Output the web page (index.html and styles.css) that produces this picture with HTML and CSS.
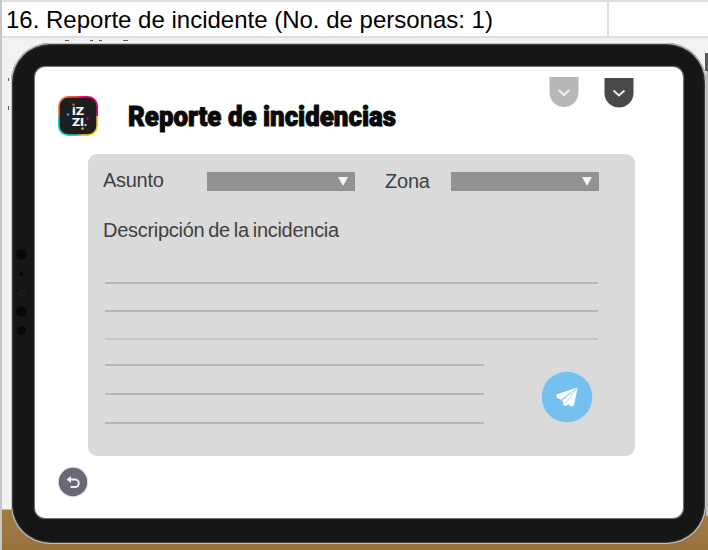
FILE: index.html
```html
<!DOCTYPE html>
<html lang="es">
<head>
<meta charset="utf-8">
<title>Reporte de incidencias</title>
<link rel="stylesheet" href="styles.css">
</head>
<body>
<div class="sheet">
  <div class="sheet-row"><div class="cell">16. Reporte de incidente (No. de personas: 1)</div><div class="cell-empty"></div></div>
  <div class="scene">
    <i class="mark mark-top"></i><i class="mark mark-left"></i><i class="mark mark-left-low"></i><i class="mark mark-right"></i><i class="mark mark-side"></i>
    <div class="tablet">
      <svg class="sensors" width="20" height="100" viewBox="0 0 20 100">
        <g fill="#080808"><circle cx="9.500" cy="14.500" r="5.300"/><circle cx="9.500" cy="34" r="2"/><circle cx="9.500" cy="71.500" r="5.300"/><circle cx="9.500" cy="90.500" r="4.200"/></g>
        <circle cx="10" cy="53" r="2.500" fill="#111a25" stroke="#17263a"/>
      </svg>
      <main class="screen">
        <header class="header">
          <svg class="logo" width="40" height="40" viewBox="0 0 40 40">
            <defs>
              <clipPath id="tile"><rect width="40" height="40" rx="10"/></clipPath>
              <linearGradient id="top"><stop offset="0" stop-color="#f58a45"/><stop offset=".5" stop-color="#e8443f"/><stop offset=".65" stop-color="#e6007e"/><stop offset="1" stop-color="#dc0088"/></linearGradient>
              <linearGradient id="bottom"><stop offset="0" stop-color="#20c5c5"/><stop offset=".45" stop-color="#32cbbb"/><stop offset=".6" stop-color="#e9cf35"/><stop offset="1" stop-color="#f5cb20"/></linearGradient>
            </defs>
            <g clip-path="url(#tile)"><path fill="url(#top)" d="M0 0h40v20H0z"/><path fill="url(#bottom)" d="M0 20h40v20H0z"/></g>
            <rect x="1.700" y="1.700" width="36.600" height="36.600" rx="8.500" fill="#1e1d20"/>
            <g class="logo-text"><text x="14" y="19" textLength="12" lengthAdjust="spacingAndGlyphs">iZ</text><text x="14" y="30" textLength="12" lengthAdjust="spacingAndGlyphs">ZI</text></g>
            <circle cx="15.500" cy="8.700" r="1.300" fill="#e65d32"/><circle cx="10" cy="18.500" r="1.200" fill="#20b7b2"/><circle cx="29.500" cy="22.500" r="1.200" fill="#ae1467"/><circle cx="27.500" cy="29" r="1" fill="#f6f6f6"/><circle cx="24.500" cy="32.500" r="1.300" fill="#e3ae28"/>
          </svg>
          <h1 class="title"><svg width="280" height="40" viewBox="0 0 280 40"><text x="1" y="28" textLength="268" lengthAdjust="spacingAndGlyphs">Reporte de incidencias</text></svg></h1>
          <div class="tabs">
            <svg width="30" height="31" viewBox="0 0 30 31"><path d="M.5 0h29v15.500a14.500 14.500 0 0 1-29 0z" fill="#b7b7b7"/><path d="M9.500 13l5.500 5 5.500-5" fill="none" stroke="#f1f1f1" stroke-width="2"/></svg>
            <svg width="30" height="31" viewBox="0 0 30 31"><path d="M.5 1h29v15a14.500 14.500 0 0 1-29 0z" fill="#484848"/><path d="M9.500 13.500l5.500 5 5.500-5" fill="none" stroke="#e8e8e8" stroke-width="2"/></svg>
          </div>
        </header>
        <section class="card">
          <div class="fields">
            <span class="label asunto">Asunto</span>
            <div class="select"><i class="caret"></i></div>
            <span class="label zona">Zona</span>
            <div class="select"><i class="caret"></i></div>
          </div>
          <div class="label description">Descripción de la incidencia</div>
          <div class="lines wide"><i></i><i></i><i class="faint"></i></div>
          <div class="lower">
            <div class="lines short"><i></i><i></i><i></i></div>
            <svg class="send" width="56" height="56" viewBox="0 0 56 56"><circle cx="28" cy="28" r="27" fill="#d3dbe3"/><circle cx="28" cy="28" r="25.300" fill="#74c1ef"/><path fill="#fff" d="M38.800 18.200L17 25.800l1 3 4 2zM38.800 18.200L22.800 32l2 1.200-.8 2.500 3 1.300 2.500-1.800 2.300 2.300 3-.8z"/><path d="M38.300 18.800L22.300 31.500M38.200 19L26.500 34.500" fill="none" stroke="#9cd2f3" stroke-width=".8"/></svg>
          </div>
        </section>
        <svg class="back" width="32" height="32" viewBox="0 0 32 32"><circle cx="16" cy="16" r="15.300" fill="#dfe0e8"/><circle cx="16" cy="16" r="14.200" fill="#686973"/><path fill="none" stroke="#f0f0f4" stroke-width="2" stroke-linejoin="round" d="M11 13.500h7a3.800 3.800 0 0 1 0 7.600h-4.500"/><path fill="#f0f0f4" d="M9.500 13.500l4.500-3.600v7.200z"/></svg>
      </main>
    </div>
  </div>
</div>
</body>
</html>
```

FILE: styles.css
```css
* { box-sizing: border-box; }
body { margin: 0; width: 708px; height: 550px; overflow: hidden; font-family: "Liberation Sans", Arial, sans-serif; }
svg { display: block; flex: none; }
.sheet { height: 550px; border-left: 2px solid #c6c6c6; }
.sheet-row { display: flex; height: 38px; border-top: 2px solid #dedede; border-bottom: 2px solid #dedede; background: #fff; }
.cell { width: 607px; padding-left: 4px; border-right: 2px solid #dedede; font-size: 24px; line-height: 36px; color: #000; white-space: nowrap; }
.cell-empty { flex: 1; }
.scene { position: relative; height: 512px; padding: 5px 0 0 9px; overflow: hidden; background: linear-gradient(#f3f2f3 0 471px, #a27b43 472px, #98713d 100%); }
.mark { position: absolute; background: #5b5b5b; filter: blur(.7px); }
.mark-top { left: 63px; top: 2px; width: 63px; height: 1px; background: linear-gradient(90deg, #555 0 4px, transparent 4px 25px, #555 25px 28px, transparent 28px 34px, #555 34px 37px, transparent 37px 58px, #555 58px); }
.mark-left { left: 6px; top: 40px; width: 1px; height: 3px; }
.mark-left-low { left: 6px; top: 68px; width: 1px; height: 4px; }
.mark-right { left: 703px; top: 15px; width: 5px; height: 18px; }
.mark-side { left: 704px; top: 33px; width: 3px; height: 445px; background: #bcbcbc; }
.tablet { position: relative; width: 695px; height: 501px; padding: 24px 0 0 24px; border-radius: 39px; background: #161616; box-shadow: inset 0 0 0 1px #c8c3c0, inset 0 0 2px 1px #aaa; }
.sensors { position: absolute; left: 1px; top: 197px; }
.screen { width: 648px; height: 451px; padding: 10px 0 0 22px; border-radius: 10px; background: #fff; box-shadow: 0 0 1px 1px #777; }
.header { display: flex; height: 77px; }
.logo { margin: 19px 0 0 1px; }
.logo-text { fill: #f6f6f6; font: 900 11.5px Roboto, sans-serif; }
.title { margin: 21px 0 0 29px; font: 900 28.5px Roboto, sans-serif; }
.title text { fill: #090909; stroke: #090909; stroke-width: 1px; }
.tabs { display: flex; gap: 25px; margin-left: 142px; }
.card { width: 547px; height: 302px; margin-left: 31px; padding: 14px 0 0 15px; border-radius: 9px; background: #dadada; }
.fields { display: flex; align-items: center; height: 27px; }
.label { font-size: 20px; line-height: 24px; color: #414141; white-space: nowrap; }
.asunto { width: 104px; padding-bottom: 4px; letter-spacing: -.3px; }
.zona { width: 66px; margin-left: 30px; padding-bottom: 1px; letter-spacing: -.2px; }
.select { display: flex; width: 148px; height: 19px; justify-content: flex-end; align-items: center; padding-right: 7px; background: #929292; }
.caret { width: 10px; height: 9px; background: #f3f3f3; clip-path: polygon(0 0, 100% 0, 50% 100%); }
.description { margin-top: 23px; letter-spacing: -.28px; word-spacing: -1.4px; }
.lines { display: flex; flex-direction: column; gap: 26px; margin-left: 2px; }
.lines i { height: 2px; background: #b6b6b6; }
.lines .faint { background: #c3c3c3; }
.wide { width: 493px; margin-top: 40px; }
.lower { display: flex; height: 85px; margin-top: 24px; }
.short { width: 379px; gap: 27px; }
.send { margin: 5px 0 0 55px; }
.back { margin-top: 10px; }
```
